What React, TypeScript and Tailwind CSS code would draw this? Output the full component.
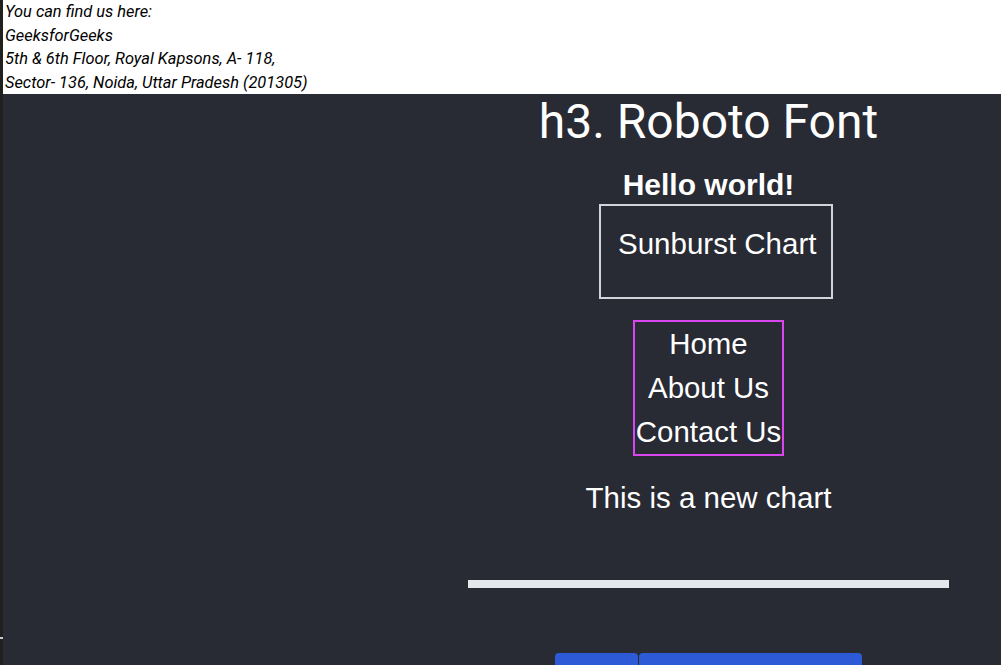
export default function App() {
  return (
    <div className="flex h-[665px] w-[1001px] overflow-hidden bg-[#282a34]">
      {/* thin side rail */}
      <div className="flex w-[3px] shrink-0 flex-col bg-[#20211f]">
        <div className="h-[637px]" />
        <div className="h-[2px] bg-[#c8c8c8]" />
      </div>

      <div className="flex min-w-0 flex-1 flex-col">
        <address className="h-[94px] bg-white pl-[2px] font-['Roboto',sans-serif] text-[16.4px] leading-[23.5px] italic text-black">
          You can find us here:
          <br />
          GeeksforGeeks
          <br />
          5th &amp; 6th Floor, Royal Kapsons, A- 118,
          <br />
          Sector- 136, Noida, Uttar Pradesh (201305)
        </address>

        <div className="flex">
          <div className="w-[465px] shrink-0" />
          <div className="flex w-[481px] flex-col items-center text-white">
            <h3 className="font-['Roboto',sans-serif] text-[48px] leading-[56px] font-normal">
              h3. Roboto Font
            </h3>
            <h1 className="mt-[19px] font-['Liberation_Sans',Arial,sans-serif] text-[30px] leading-[32px] font-bold">
              Hello world!
            </h1>
            <div className="ml-[15px] mt-[3px] h-[95px] w-[234px] whitespace-nowrap border-2 border-[#d1d5db] pl-[17px] pt-[21px] font-['Liberation_Sans',Arial,sans-serif] text-[29.5px] leading-[34px]">
              Sunburst Chart
            </div>
            <nav className="mt-[21px] flex flex-col items-center border-2 border-[#d946ef] px-[1px] font-['Liberation_Sans',Arial,sans-serif] text-[29.4px] leading-[44px]">
              <span>Home</span>
              <span>About Us</span>
              <span>Contact Us</span>
            </nav>
            <p className="mt-[20px] font-['Liberation_Sans',Arial,sans-serif] text-[29.5px] leading-[44px]">
              This is a new chart
            </p>
            <div className="mt-[60px] h-[8px] w-full bg-[#e5e7eb]" />
            <div className="mt-[65px] flex w-full pl-[87px]">
              <div className="h-[20px] w-[83px] rounded-t-[4px] bg-[#2d5ad6]" />
              <div className="ml-[1px] h-[20px] w-[223px] rounded-t-[4px] bg-[#2d5ad6]" />
            </div>
          </div>
        </div>
      </div>
    </div>
  );
}
